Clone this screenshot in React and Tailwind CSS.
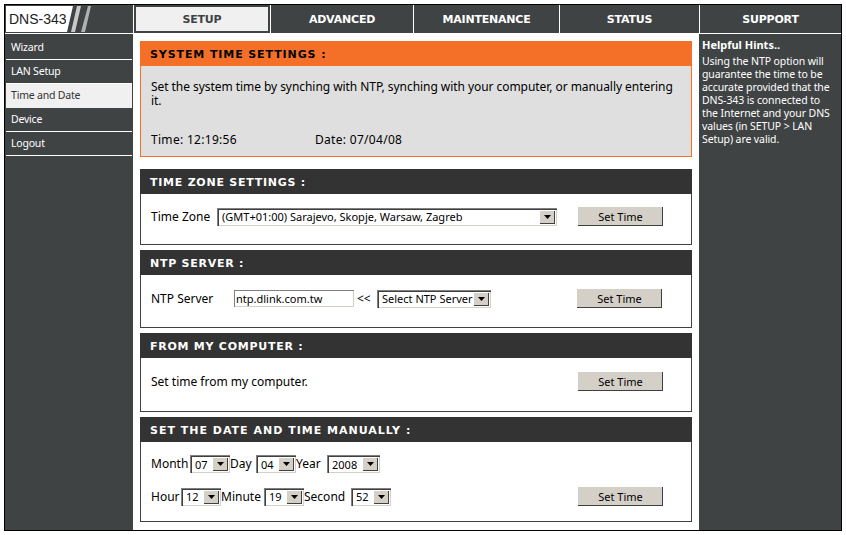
const TABS = [
  { label: 'SETUP', w: 'w-[137px]', active: true },
  { label: 'ADVANCED', w: 'w-[143px]' },
  { label: 'MAINTENANCE', w: 'w-[146px]' },
  { label: 'STATUS', w: 'w-[140px]' },
];

const NAV = ['Wizard', 'LAN Setup', 'Time and Date', 'Device', 'Logout'];

function Arrow() {
  return (
    <span className="flex h-[14px] w-[16px] shrink-0 items-center justify-center bg-[#d4d0c8] shadow-[inset_1px_1px_0_#fff,inset_-1px_-1px_0_#404040]">
      <svg width="7" height="4" viewBox="0 0 7 4"><path d="M0 0h7L3.500 4z" fill="#000" /></svg>
    </span>
  );
}

function Combo({ value, width }) {
  return (
    <div
      className={`flex h-[18px] items-center justify-between bg-white pr-[2px] pl-[5px] text-[11px] leading-none text-black shadow-[inset_1px_1px_0_#808080,inset_2px_2px_0_#404040,inset_-1px_-1px_0_#d4d0c8] ${width}`}
    >
      <span className="whitespace-nowrap">{value}</span>
      <Arrow />
    </div>
  );
}

function SetTime() {
  return (
    <button className="block h-[19px] w-[85px] shrink-0 bg-[#d4d0c8] text-[11px] leading-none text-black shadow-[inset_-1px_-1px_0_#404040]">
      Set Time
    </button>
  );
}

function Card({ title, bodyH, tracking = 'tracking-[0.75px]', children, className = '' }) {
  return (
    <section className={`w-[552px] ${className}`}>
      <h2 className={`flex h-[25px] items-center bg-[#333333] pt-[3px] pl-[10px] font-['DejaVu_Sans'] text-[11px] font-bold text-white ${tracking}`}>
        {title}
      </h2>
      <div className={`border border-t-0 border-[#404040] bg-white px-[10px] ${bodyH}`}>{children}</div>
    </section>
  );
}

export default function App() {
  return (
    <div className="h-[535px] w-[846px] bg-white p-[4px] font-['Noto_Sans',sans-serif] text-[11px]">
      <div className="h-[526px] w-[838px] border border-b-0 border-black">
        <header className="flex h-[29px] border-b border-white bg-[#404344]">
          <div className="flex w-[129px] border-r border-white">
            <div className="my-[1px] ml-[1px] flex w-[60px] items-center bg-white pl-[3px] font-['Liberation_Sans'] text-[14px] whitespace-nowrap text-[#222]">
              DNS-343
            </div>
            <svg width="60" height="28" viewBox="0 0 60 28" className="shrink-0">
              <path d="M0 1h7L1 27H0z" fill="#fff" />
              <path d="M11 1h4l-6 26H5z" fill="#c9c9c9" />
              <path d="M22 1h3l-6 26h-4z" fill="#b0b0b0" />
            </svg>
          </div>
          {TABS.map((t) => (
            <div key={t.label} className={`flex items-center justify-center border-r border-white font-['DejaVu_Sans'] font-bold tracking-[-0.2px] ${t.active ? 'text-[#404344]' : 'pt-[2px] text-white'} ${t.w}`}>
              {t.active ? (
                <span className="flex h-[24px] w-[132px] items-center justify-center bg-[#f0f0f0] pt-[2px]">{t.label}</span>
              ) : (
                t.label
              )}
            </div>
          ))}
          <div className="flex flex-1 items-center justify-center pt-[2px] font-['DejaVu_Sans'] font-bold tracking-[-0.2px] text-white">SUPPORT</div>
        </header>

        <div className="flex h-[496px] bg-white">
          <nav className="w-[128px] bg-[#404344] pt-[2px] pl-[1px] text-[10.500px] tracking-[-0.2px]">
            {NAV.map((n) => (
              <div
                key={n}
                className={`flex h-[24px] w-[126px] items-center pl-[5px] ${n === 'Time and Date' ? 'bg-[#f0f0f0] text-[#333]' : 'border-b border-white pt-[1px] text-white'}`}
              >
                {n}
              </div>
            ))}
          </nav>

          <main className="w-[566px] pt-[7px] pl-[7px]">
            <section className="w-[552px]">
              <h2 className="flex h-[25px] items-center bg-[#f47028] pt-[3px] pl-[10px] font-['DejaVu_Sans'] text-[11px] font-bold tracking-[0.9px] text-black">
                SYSTEM TIME SETTINGS :
              </h2>
              <div className="flex h-[91px] flex-col border border-t-0 border-[#f47028] bg-[#dfdfdf] px-[10px] text-[12px] text-black">
                <p className="mt-[14px] leading-[14px] tracking-[-0.055px]">
                  Set the system time by synching with NTP, synching with your computer, or manually entering it.
                </p>
                <p className="mt-[25px] flex leading-[14px] tracking-[0.3px]">
                  <span className="w-[164px]">Time: 12:19:56</span>
                  <span>Date: 07/04/08</span>
                </p>
              </div>
            </section>

            <Card title="TIME ZONE SETTINGS :" bodyH="h-[51px]" className="mt-[12px]">
              <div className="flex items-center pt-[13px] text-[12px]">
                <span className="w-[66px]">Time Zone</span>
                <Combo value="(GMT+01:00) Sarajevo, Skopje, Warsaw, Zagreb" width="w-[340px]" />
                <span className="ml-[21px]"><SetTime /></span>
              </div>
            </Card>

            <Card title="NTP SERVER :" bodyH="h-[53px]" className="mt-[5px]">
              <div className="flex items-center pt-[14px] text-[12px]">
                <span className="w-[83px]">NTP Server</span>
                <input
                  readOnly
                  value="ntp.dlink.com.tw"
                  className="h-[17px] w-[120px] bg-white pl-[2px] text-[11px] outline-none shadow-[inset_1px_1px_0_#808080,inset_-1px_-1px_0_#d4d0c8]"
                />
                <span className="ml-[3px] w-[20px]">&lt;&lt;</span>
                <Combo value="Select NTP Server" width="w-[114px]" />
                <span className="ml-[86px]"><SetTime /></span>
              </div>
            </Card>

            <Card title="FROM MY COMPUTER :" bodyH="h-[54px]" className="mt-[5px]">
              <div className="flex items-center justify-between pt-[14px] text-[12px]">
                <span>Set time from my computer.</span>
                <span className="mr-[18px]"><SetTime /></span>
              </div>
            </Card>

            <Card title="SET THE DATE AND TIME MANUALLY :" bodyH="h-[80px]" tracking="tracking-[1px]" className="mt-[5px]">
              <div className="flex items-center pt-[13px] text-[12px]">
                <span className="w-[39px]">Month</span>
                <Combo value="07" width="w-[40px]" />
                <span className="w-[26px]">Day</span>
                <Combo value="04" width="w-[40px]" />
                <span className="w-[31px]">Year</span>
                <Combo value="2008" width="w-[53px]" />
              </div>
              <div className="mt-[14px] flex items-center text-[12px]">
                <span className="w-[30px]">Hour</span>
                <Combo value="12" width="w-[40px]" />
                <span className="w-[43px]">Minute</span>
                <Combo value="19" width="w-[40px]" />
                <span className="w-[47px]">Second</span>
                <Combo value="52" width="w-[40px]" />
                <span className="ml-[187px]"><SetTime /></span>
              </div>
            </Card>
          </main>

          <aside className="flex-1 bg-[#404344] pt-[4px] pr-[6px] pl-[3px] text-white">
            <h3 className="text-[11px] leading-[14px] font-bold">Helpful Hints..</h3>
            <p className="mt-[3px] text-[10.500px] leading-[13px] tracking-[-0.1px]">
              Using the NTP option will guarantee the time to be accurate provided that the DNS-343 is connected to the Internet and your DNS values (in SETUP &gt; LAN Setup) are valid.
            </p>
          </aside>
        </div>
      </div>
      <div className="h-[1px] w-[838px] bg-black" />
    </div>
  );
}
